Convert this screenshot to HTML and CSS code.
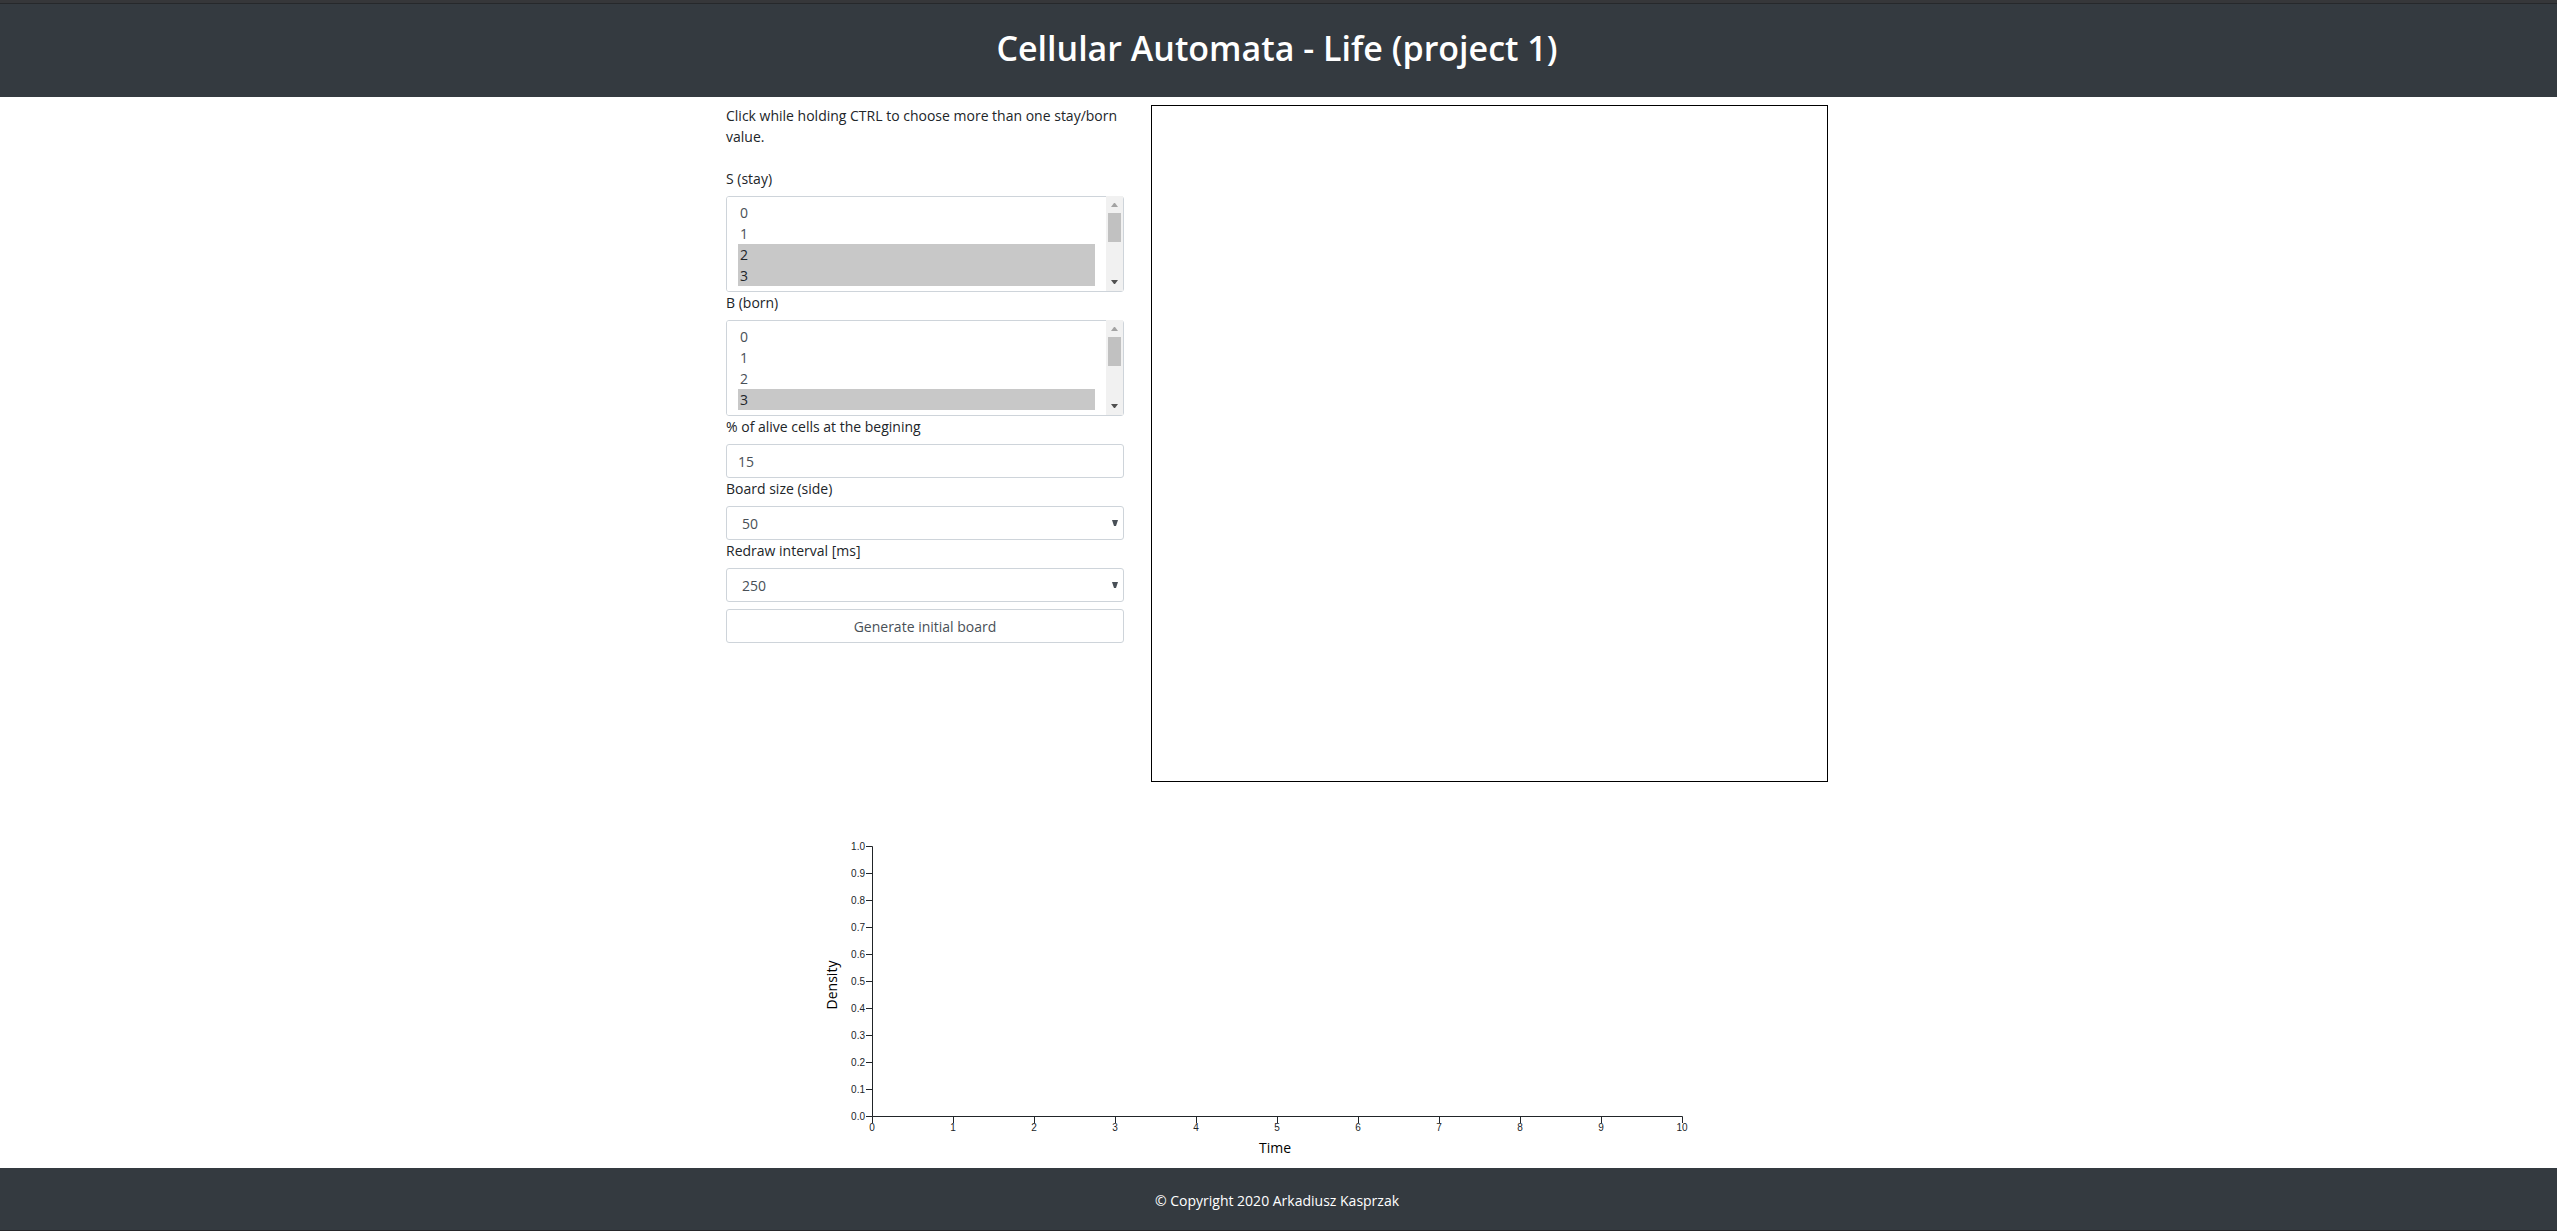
FILE: index.html
```html
<!DOCTYPE html>
<html lang="en">
<head>
<meta charset="utf-8">
<title>Cellular Automata - Life (project 1)</title>
<meta name="viewport" content="width=device-width, initial-scale=1">
<link rel="stylesheet" href="styles.css">
</head>
<body>
<header class="page-header">
  <h1 class="page-title">Cellular Automata - Life (project 1)</h1>
</header>
<main class="content">
  <div class="workspace">
    <form class="settings">
      <p class="hint">Click while holding CTRL to choose more than one stay/born value.</p>
      <label for="stay">S (stay)</label>
      <div class="list-box">
        <select class="control list" id="stay" multiple size="4">
          <option>0</option><option>1</option><option selected>2</option><option selected>3</option>
          <option>4</option><option>5</option><option>6</option><option>7</option><option>8</option>
        </select>
      </div>
      <label for="born">B (born)</label>
      <div class="list-box">
        <select class="control list" id="born" multiple size="4">
          <option>0</option><option>1</option><option>2</option><option selected>3</option>
          <option>4</option><option>5</option><option>6</option><option>7</option><option>8</option>
        </select>
      </div>
      <label for="alive">% of alive cells at the begining</label>
      <input class="control" id="alive" type="text" inputmode="numeric" value="15">
      <label for="side">Board size (side)</label>
      <select class="control dropdown" id="side"><option>50</option></select>
      <label for="interval">Redraw interval [ms]</label>
      <select class="control dropdown" id="interval"><option>250</option></select>
      <button class="control generate" type="button">Generate initial board</button>
    </form>
    <div class="board"></div>
  </div>
  <svg class="chart" width="911" height="342" viewBox="0 0 911 342" role="img" aria-label="Density over time">
    <g class="axis">
      <path d="M43 20.5H49.5V290.5H43M43 47.5h6M43 74.5h6M43 101.5h6M43 128.5h6M43 155.5h6M43 182.5h6M43 209.5h6M43 236.5h6M43 263.5h6"/>
      <path d="M49.5 297V290.5H859.5V297M130.5 291v6M211.5 291v6M292.5 291v6M373.5 291v6M454.5 291v6M535.5 291v6M616.5 291v6M697.5 291v6M778.5 291v6"/>
    </g>
    <g class="ticks ticks-y">
      <text x="42" y="24">1.0</text><text x="42" y="51">0.9</text><text x="42" y="78">0.8</text><text x="42" y="105">0.7</text>
      <text x="42" y="132">0.6</text><text x="42" y="159">0.5</text><text x="42" y="186">0.4</text><text x="42" y="213">0.3</text>
      <text x="42" y="240">0.2</text><text x="42" y="267">0.1</text><text x="42" y="294">0.0</text>
    </g>
    <g class="ticks ticks-x">
      <text x="49" y="305">0</text><text x="130" y="305">1</text><text x="211" y="305">2</text><text x="292" y="305">3</text>
      <text x="373" y="305">4</text><text x="454" y="305">5</text><text x="535" y="305">6</text><text x="616" y="305">7</text>
      <text x="697" y="305">8</text><text x="778" y="305">9</text><text x="859" y="305">10</text>
    </g>
    <text class="axis-name" transform="translate(14 159) rotate(-90)">Density</text>
    <text class="axis-name" x="452" y="327">Time</text>
  </svg>
</main>
<footer class="page-footer">© Copyright 2020 Arkadiusz Kasprzak</footer>
</body>
</html>
```

FILE: styles.css
```css
*, *::before, *::after { box-sizing: border-box; }

body {
  margin: 0;
  min-height: 100vh;
  display: flex;
  flex-direction: column;
  background: #fff;
  color: #212529;
  font: 14px/21px "Segoe UI", "Open Sans", "Noto Sans", sans-serif;
}

.page-header {
  padding: 24px 19px 27px 16px;
  border-top: 3px solid #36373a;
  background: #343a40;
  box-shadow: inset 0 1px #26282b;
  color: #fff;
  text-align: center;
}

.page-title {
  margin: 0;
  font-size: 34px;
  line-height: 43px;
  font-weight: 600;
}

.content {
  flex: 1;
  padding: 8px 16px 0;
}

.workspace {
  display: grid;
  grid-template-columns: 398fr 677fr;
  gap: 27px;
  max-width: 1105px;
  margin: 0 auto;
  padding-right: 3px;
}

.settings {
  display: flex;
  flex-direction: column;
}

.hint { margin: 0 0 21px; }

label { margin-bottom: 7px; }

.control {
  width: 100%;
  height: 34px;
  padding: 5px 11px;
  border: 1px solid #ced4da;
  border-radius: 3px;
  outline: 0;
  background: #fff;
  color: #495057;
  font: inherit;
}

.list-box {
  position: relative;
  height: 96px;
}

.list {
  height: 96px;
  padding: 5px 28px 5px 11px;
  overflow-y: scroll;
  scrollbar-width: none;
}

.list option {
  min-height: 21px;
  padding: 1px 2px 0;
  line-height: 20px;
}

.list option:checked {
  background: #c8c8c8 linear-gradient(#c8c8c8, #c8c8c8);
  color: #212529;
}

/* scroll bar: up arrow, down arrow and thumb over the track */
.list-box::after {
  content: "";
  position: absolute;
  top: 0;
  right: 1px;
  bottom: 1px;
  width: 17px;
  pointer-events: none;
  background:
    url("data:image/svg+xml,%3Csvg xmlns='http://www.w3.org/2000/svg' width='7' height='4'%3E%3Cpath d='M0 4L3 0h1l3 4z' fill='%23a3a3a3'/%3E%3C/svg%3E") 5px 7px no-repeat,
    url("data:image/svg+xml,%3Csvg xmlns='http://www.w3.org/2000/svg' width='7' height='4'%3E%3Cpath d='M0 0h7L4 4H3z' fill='%23505050'/%3E%3C/svg%3E") 5px 84px no-repeat,
    linear-gradient(#c1c1c1, #c1c1c1) 2px 17px / 13px 29px no-repeat,
    #f1f1f1;
}

.dropdown {
  appearance: none;
  padding-left: 15px;
  background: #fff url("data:image/svg+xml,%3Csvg xmlns='http://www.w3.org/2000/svg' width='6' height='6'%3E%3Cpath d='M0 0h6L4 6H2z' fill='%23495057'/%3E%3C/svg%3E") right 5px center no-repeat;
}

.generate {
  margin-top: 7px;
  text-align: center;
}

.board {
  aspect-ratio: 1;
  border: 1px solid #000;
}

.chart {
  display: block;
  max-width: 100%;
  margin: 44px auto 0;
}

.axis {
  fill: none;
  stroke: #212529;
}

.ticks {
  fill: #212529;
  font: 10px "Liberation Sans", Arial, sans-serif;
}

.ticks-y { text-anchor: end; }
.ticks-x { text-anchor: middle; }

.axis-name {
  fill: #000;
  text-anchor: middle;
}

.page-footer {
  padding: 22px 19px 19px 16px;
  border-bottom: 1px solid #26282b;
  background: #343a40;
  color: #fff;
  text-align: center;
}
```
